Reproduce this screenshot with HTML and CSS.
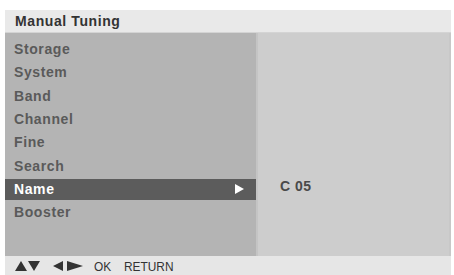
FILE: index.html
```html
<!DOCTYPE html>
<html>
<head>
<meta charset="utf-8">
<link rel="stylesheet" href="styles.css">
</head>
<body>
<div class="screen">
  <div class="header">Manual Tuning</div>
  <div class="main">
    <div class="menu">
      <div class="item">Storage</div>
      <div class="item">System</div>
      <div class="item">Band</div>
      <div class="item">Channel</div>
      <div class="item">Fine</div>
      <div class="item">Search</div>
      <div class="item active">Name<span class="tri"></span></div>
      <div class="item">Booster</div>
    </div>
    <div class="detail">
      <div class="value">C 05</div>
    </div>
  </div>
  <div class="footer">
    <svg class="ic" width="25" height="10" viewBox="0 0 25 10"><polygon points="0,10 6,0 12,10" fill="#333"/><polygon points="13,0 25,0 19,10" fill="#333"/></svg>
    <svg class="ic ic2" width="31" height="10" viewBox="0 0 31 10"><polygon points="0,5 10,0 10,10" fill="#333"/><polygon points="14,0 14,10 30,5" fill="#333"/></svg>
    <span>OK</span><span>RETURN</span>
  </div>
</div>
</body>
</html>
```
FILE: styles.css
```css
html, body { margin: 0; padding: 0; background: #fff; }
body { font-family: "Liberation Sans", Arial, sans-serif; }
.screen { width: 446px; margin: 10px 0 0 5px; display: flex; flex-direction: column; }
.header { height: 23px; background: #e9e9e9; color: #333; font-weight: bold; font-size: 14px; letter-spacing: 0.6px; line-height: 23px; padding-left: 10px; border-bottom: 1px solid #d4d4d4; box-sizing: border-box; }
.main { display: flex; height: 223px; }
.menu { width: 251px; background: #b4b4b4; padding-top: 5px; box-sizing: border-box; }
.item { height: 23.3px; line-height: 23px; font-size: 14px; letter-spacing: 0.6px; font-weight: bold; color: #5a5a5a; padding-left: 9px; display: flex; align-items: center; justify-content: space-between; }
.item.active { background: #5c5c5c; color: #fff; height: 21px; margin: 1px 0 1px 0; }
.tri { width: 0; height: 0; border-left: 9px solid #fff; border-top: 5px solid transparent; border-bottom: 5px solid transparent; margin-right: 12px; }
.detail { flex: 1; background: #cdcdcd; border-left: 2px solid #c4c4c4; border-right: 2px solid #c8c8c8; position: relative; }
.value { position: absolute; left: 22px; top: 145px; font-size: 14px; letter-spacing: 0.5px; font-weight: bold; color: #4a4a4a; }
.footer { height: 19px; background: #e6e6e6; font-size: 13.5px; color: #333; display: flex; align-items: center; padding-left: 10px; padding-top: 1px; box-sizing: border-box; }
.footer .ic { margin-right: 13px; }
.footer .ic2 { margin-right: 10px; }
.footer span { margin-right: 10px; transform: scaleX(0.88); transform-origin: left center; display: inline-block; }
```
